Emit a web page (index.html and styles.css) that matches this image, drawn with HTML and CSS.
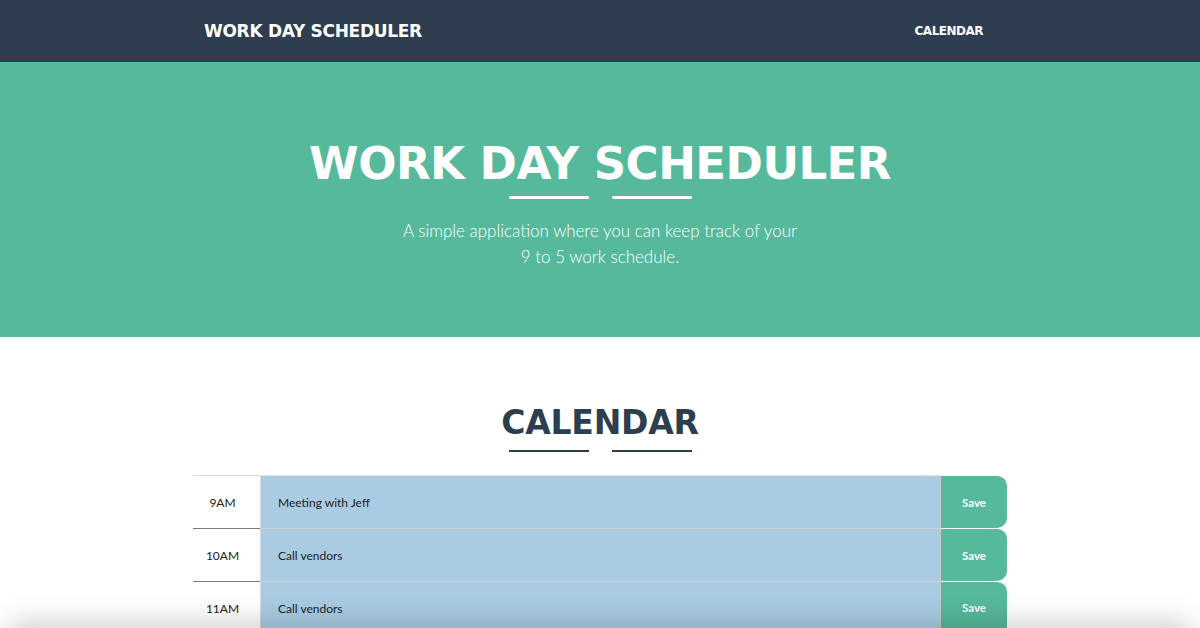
FILE: index.html
```html
<!DOCTYPE html>
<html lang="en">
<head>
<meta charset="utf-8">
<title>Work Day Scheduler</title>
<link rel="stylesheet" href="styles.css">
</head>
<body>
<nav class="navbar">
  <div class="nav-inner">
    <a class="brand" href="#">WORK DAY SCHEDULER</a>
    <a class="nav-link" href="#calendar">CALENDAR</a>
  </div>
</nav>
<header class="hero">
  <h1 class="hero-title">WORK DAY SCHEDULER</h1>
  <div class="divider divider-light"><span></span><span></span></div>
  <p class="hero-sub">A simple application where you can keep track of your<br>9 to 5 work schedule.</p>
</header>
<section class="calendar" id="calendar">
  <h2 class="cal-title">CALENDAR</h2>
  <div class="divider divider-dark"><span></span><span></span></div>
  <div class="rows">
    <div class="row first">
      <div class="hour">9AM</div>
      <div class="desc">Meeting with Jeff</div>
      <button class="save">Save</button>
    </div>
    <div class="row">
      <div class="hour">10AM</div>
      <div class="desc">Call vendors</div>
      <button class="save">Save</button>
    </div>
    <div class="row last">
      <div class="hour">11AM</div>
      <div class="desc">Call vendors</div>
      <button class="save">Save</button>
    </div>
  </div>
</section>
<div class="bottom-shadow"></div>
</body>
</html>
```

FILE: styles.css
```css
* { box-sizing: border-box; }
html, body { margin: 0; padding: 0; }
body {
  font-family: "Lato", "Liberation Sans", sans-serif;
  background: #ffffff;
  color: #222;
  overflow: hidden;
  height: 628px;
}
.navbar {
  background: #2e3d4f;
  height: 62px;
}
.nav-inner {
  width: 800px;
  margin: 0 auto;
  height: 100%;
  display: flex;
  align-items: center;
  justify-content: space-between;
  padding: 0 17px 0 4px;
}
.brand {
  font-family: "DejaVu Sans", sans-serif;
  font-weight: 700;
  font-size: 17px;
  letter-spacing: -0.3px;
  color: #fff;
  text-decoration: none;
}
.nav-link {
  font-family: "DejaVu Sans", sans-serif;
  font-weight: 700;
  font-size: 12px;
  letter-spacing: -0.5px;
  color: #fff;
  text-decoration: none;
}
.hero {
  background: #56b99c;
  height: 275px;
  display: flex;
  flex-direction: column;
  align-items: center;
  padding-top: 76px;
  color: #fff;
}
.hero-title {
  margin: 0;
  font-family: "DejaVu Sans", sans-serif;
  font-weight: 700;
  font-size: 45px;
  letter-spacing: -0.5px;
  line-height: 52px;
}
.divider {
  display: flex;
  gap: 23px;
}
.divider span {
  display: block;
  width: 80px;
  border-radius: 2px;
}
.divider-light { margin-top: 6px; }
.divider-light span { height: 3px; background: #ffffff; }
.hero-sub {
  margin: 19px 0 0;
  font-family: "Lato", sans-serif;
  font-weight: 300;
  font-size: 17px;
  line-height: 26px;
  text-align: center;
}
.calendar {
  display: flex;
  flex-direction: column;
  align-items: center;
  padding-top: 66px;
}
.cal-title {
  margin: 0;
  font-family: "DejaVu Sans", sans-serif;
  font-weight: 700;
  font-size: 33px;
  letter-spacing: -0.2px;
  line-height: 40px;
  color: #2c3e50;
}
.divider-dark { margin-top: 7px; }
.divider-dark span { height: 2px; background: #2c3e50; border-radius: 0; }
.rows {
  width: 814px;
  margin-top: 23px;
  display: flex;
  flex-direction: column;
}
.row {
  display: flex;
  height: 53px;
}
.row.last { height: 47px; }
.hour {
  width: 67px;
  border-top: 1px solid #7a7a7a;
  display: flex;
  align-items: center;
  justify-content: center;
  padding-right: 8px;
  font-size: 12px;
  color: #222;
}
.row.last .hour, .row.last .desc, .row.last .save { align-items: flex-start; padding-top: 19px; }
.row.first .hour { border-top-color: #d9d9d9; }
.desc {
  flex: 1;
  background: #a9cce3;
  border-top: 1px solid #d2d2d2;
  border-left: 1px solid #d6dbe0;
  border-right: 1px solid #c8c8c8;
  display: flex;
  align-items: center;
  padding-left: 17px;
  font-size: 12px;
  color: #222;
}
.row.first .desc { border-top-color: #e3e3e3; }
.save {
  width: 66px;
  border: none;
  border-top: 1px solid #ffffff;
  background: #56b99c;
  color: #fff;
  font-family: "Lato", sans-serif;
  font-weight: 700;
  font-size: 11.5px;
  border-radius: 0 10px 10px 0;
  padding: 0;
  cursor: pointer;
  display: flex;
  align-items: center;
  justify-content: center;
}
.row.last .save { border-radius: 0 10px 0 0; }
.bottom-shadow {
  position: fixed;
  left: 10px;
  right: 10px;
  bottom: -20px;
  height: 20px;
  background: #fff;
  box-shadow: 0 0 30px 4px rgba(0, 0, 0, 0.22);
  border-radius: 30px;
}
```
